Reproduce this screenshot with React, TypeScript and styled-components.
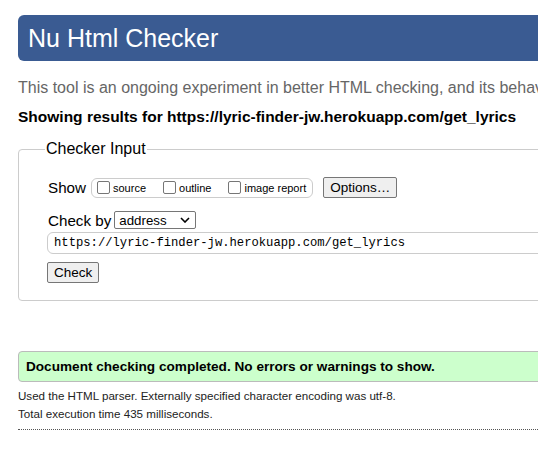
import React from "react";
import styled, { createGlobalStyle } from "styled-components";

const Global = createGlobalStyle`
  html, body { margin: 0; padding: 0; background: #fff; overflow: hidden; }
  body { font-family: "Liberation Sans", Arial, sans-serif; color: #000; }
`;

const Page = styled.div`
  width: 720px;
  padding: 15px 0 0 18px;
  box-sizing: border-box;
`;

const Header = styled.h1`
  margin: 0;
  height: 46px;
  display: flex;
  align-items: center;
  padding: 0 10px;
  background: #3a5b92;
  color: #fff;
  border-radius: 6px;
  font-size: 25px;
  font-weight: normal;
`;

const Intro = styled.p`
  margin: 18px 0 0;
  font-size: 16px;
  line-height: 18px;
  color: #666;
  white-space: nowrap;
`;

const Results = styled.p`
  margin: 11px 0 0;
  font-size: 15.5px;
  line-height: 18px;
  font-weight: bold;
  white-space: nowrap;
`;

const Fieldset = styled.fieldset`
  margin: 14px 0 0;
  padding: 13px 0 17px 29px;
  border: 1px solid #ccc;
  border-radius: 4px;
`;

const Legend = styled.legend`
  font-size: 16px;
  line-height: 18px;
  padding: 0 1px;
  margin-left: -3px;
`;

const Row = styled.div<{ $mt?: number }>`
  display: flex;
  align-items: center;
  margin-top: ${(p) => p.$mt ?? 0}px;
  font-size: 15.2px;
`;

const Label = styled.span<{ $gap?: number }>`
  margin-right: ${(p) => p.$gap ?? 4}px;
`;

const CheckGroup = styled.div`
  display: flex;
  align-items: center;
  height: 18px;
  border: 1px solid #ccc;
  border-radius: 6px;
  padding: 0 6px 0 5px;
  gap: 17px;
`;

const Opt = styled.label`
  display: flex;
  align-items: center;
  font-size: 11px;
`;

const Box = styled.span`
  width: 11px;
  height: 11px;
  border: 1px solid #767676;
  border-radius: 2px;
  margin-right: 3px;
  background: #fff;
`;

const Button = styled.button<{ $ml?: number }>`
  font-family: "Liberation Sans", Arial, sans-serif;
  font-size: 13.5px;
  color: #000;
  background: #efefef;
  border: 1px solid #767676;
  border-radius: 2px;
  padding: 0 6px;
  height: 21px;
  margin-left: ${(p) => p.$ml ?? 0}px;
`;

const Select = styled.div`
  display: flex;
  align-items: center;
  justify-content: space-between;
  width: 82px;
  height: 18px;
  box-sizing: border-box;
  border: 1px solid #767676;
  border-radius: 2px;
  padding: 0 5px 0 4px;
  font-size: 13.3px;
`;

const UrlInput = styled.div`
  height: 22px;
  box-sizing: border-box;
  border: 1px solid #ccc;
  border-radius: 6px;
  padding: 0 6px;
  display: flex;
  align-items: center;
  font-family: "Liberation Mono", "DejaVu Sans Mono", monospace;
  font-size: 12.2px;
  color: #000;
  margin-top: 3px;
  margin-left: -1px;
`;

const Success = styled.p`
  margin: 50px 0 0;
  height: 31px;
  box-sizing: border-box;
  display: flex;
  align-items: center;
  padding: 0 7px;
  background: #ccffcc;
  border: 1px solid #bbb;
  border-radius: 4px;
  font-weight: bold;
  font-size: 13.6px;
`;

const Details = styled.p`
  margin: 0;
  font-size: 11.6px;
  line-height: 18px;
  color: #222;
`;

const DetailsWrap = styled.div`
  margin-top: 5px;
  padding-bottom: 6px;
  border-bottom: 1px dotted #555;
`;

export default function App() {
  return (
    <>
      <Global />
      <Page>
        <Header>Nu Html Checker</Header>
        <Intro>
          This tool is an ongoing experiment in better HTML checking, and its behavior remains subject to change
        </Intro>
        <Results>Showing results for https://lyric-finder-jw.herokuapp.com/get_lyrics</Results>
        <Fieldset>
          <Legend>Checker Input</Legend>
          <Row $mt={6}>
            <Label $gap={5}>Show</Label>
            <CheckGroup>
              <Opt><Box />source</Opt>
              <Opt><Box />outline</Opt>
              <Opt><Box />image report</Opt>
            </CheckGroup>
            <Button $ml={10}>Options…</Button>
          </Row>
          <Row $mt={13}>
            <Label $gap={3}>Check by</Label>
            <Select>
              <span>address</span>
              <svg width="10" height="6" viewBox="0 0 10 6">
                <path d="M1 1l4 4 4-4" fill="none" stroke="#000" strokeWidth="1.6" />
              </svg>
            </Select>
          </Row>
          <UrlInput>https://lyric-finder-jw.herokuapp.com/get_lyrics</UrlInput>
          <Row $mt={8}>
            <Button $ml={-1}>Check</Button>
          </Row>
        </Fieldset>
        <Success>Document checking completed. No errors or warnings to show.</Success>
        <DetailsWrap>
          <Details>Used the HTML parser. Externally specified character encoding was utf-8.</Details>
          <Details>Total execution time 435 milliseconds.</Details>
        </DetailsWrap>
      </Page>
    </>
  );
}
